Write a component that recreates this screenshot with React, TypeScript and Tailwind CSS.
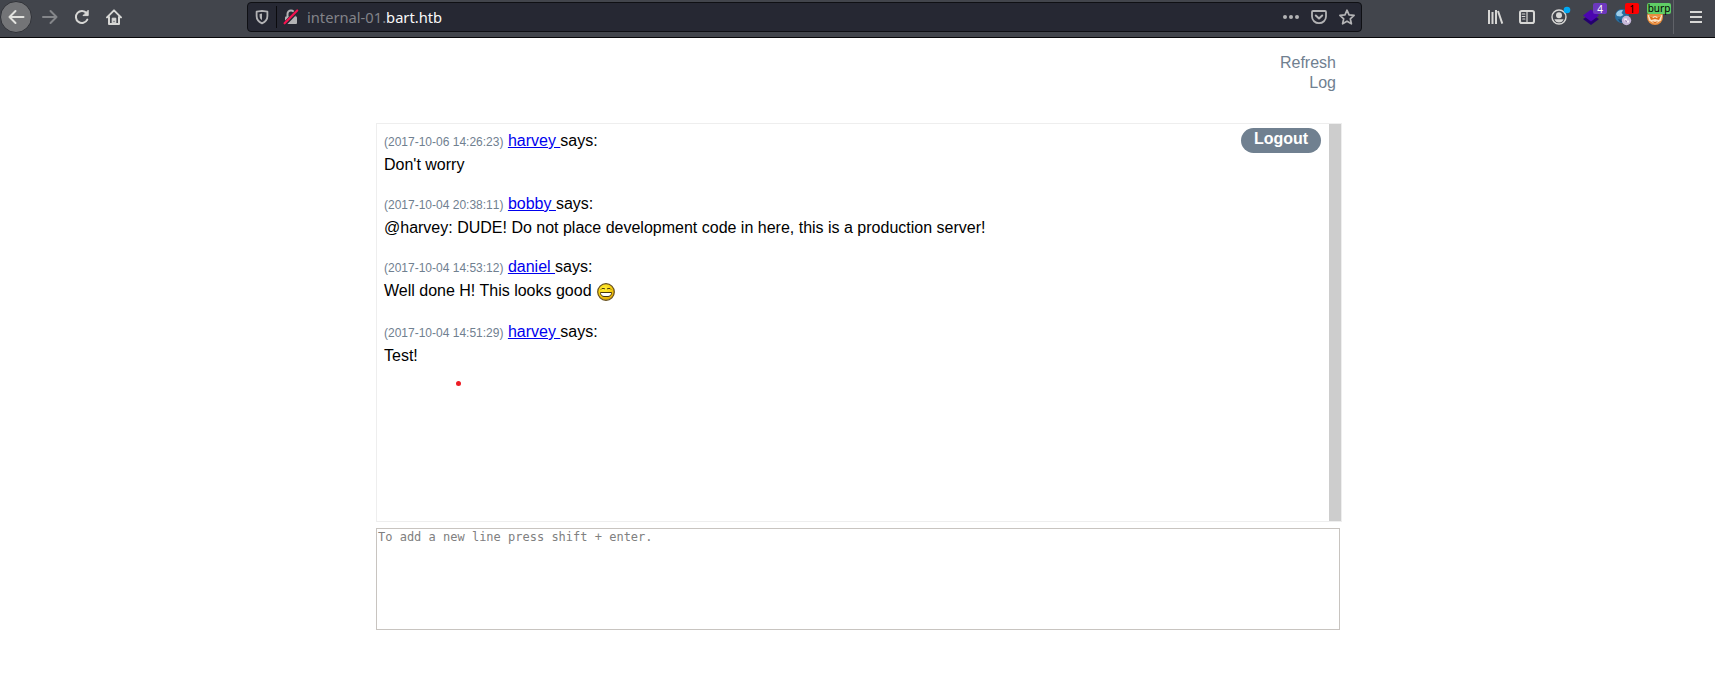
import React from "react";

const line = {
  width: 16,
  height: 16,
  viewBox: "0 0 16 16",
  fill: "none",
  stroke: "currentColor",
  strokeWidth: 2,
  strokeLinecap: "round" as const,
  strokeLinejoin: "round" as const,
  className: "shrink-0 overflow-visible",
};

const BackIcon = () => (
  <svg {...line}><path d="M15.500 8H1.500M7.500 2 1.500 8l6 6" /></svg>
);
const ForwardIcon = () => (
  <svg {...line}><path d="M1 8h13.500M8.500 2l6 6-6 6" /></svg>
);
const ReloadIcon = () => (
  <svg {...line}>
    <path d="M13.300 10.600A6 6 0 1 1 12.600 4.200" />
    <path d="M14.200 1.600v5H9.400z" fill="currentColor" strokeWidth={1} />
  </svg>
);
const HomeIcon = () => (
  <svg {...line}>
    <path d="M1 8.400 8 1.400l7 7M3 8v7h10V8" />
    <path d="M6.200 14.500V9.200h3.600v5.300" fill="currentColor" strokeWidth={1} />
    <path d="M8 12.200v.600" stroke="#42454c" strokeWidth={1} />
  </svg>
);
const ShieldIcon = () => (
  <svg {...line} width={14} height={16} viewBox="0 0 14 16">
    <path d="M7 1.800 1.600 2.700v4.400c0 3.700 2.200 5.900 5.400 7.300 3.200-1.400 5.400-3.600 5.400-7.300V2.700z" strokeWidth={1.800} />
    <path d="M7 4.600 4.600 5.100v2c0 2 .800 3.100 2.400 4.100z" fill="currentColor" stroke="none" />
  </svg>
);
const LockIcon = () => (
  <svg {...line}>
    <path d="M4.500 8V5a3.500 3.500 0 0 1 7 0v3" strokeLinecap="butt" />
    <rect x="2" y="7.500" width="12" height="7.500" rx="1" fill="currentColor" stroke="none" />
    <path d="M2.300 14.300 14.600 1.500" stroke="#262833" strokeWidth={4} />
    <path d="M1.600 14.300 14.200 1.500" stroke="#f5134f" strokeWidth={2.200} />
  </svg>
);
const DotsIcon = () => (
  <svg {...line} stroke="none" fill="currentColor">
    <circle cx="2" cy="8" r="2" /><circle cx="8" cy="8" r="2" /><circle cx="14" cy="8" r="2" />
  </svg>
);
const PocketIcon = () => (
  <svg {...line}>
    <path d="M2 2h12q1 0 1 1v4.500a7 6.700 0 0 1-14 0V3q0-1 1-1z" strokeWidth={1.800} />
    <path d="m4.800 6.500 3.200 3 3.200-3" />
  </svg>
);
const StarIcon = () => (
  <svg {...line} strokeWidth={1.700}>
    <path d="m8 1.200 2 4.600 5.100.500-3.800 3.500 1.100 5L8 12.200l-4.400 2.600 1.100-5L.9 6.300 6 5.800z" />
  </svg>
);
const LibraryIcon = () => (
  <svg {...line} strokeLinecap="butt"><path d="M2 1v14M5.500 3v12M9 1v14M11 2l4.300 12.600" /></svg>
);
const SidebarIcon = () => (
  <svg {...line}>
    <rect x="1" y="2" width="14" height="12" rx="1.800" />
    <path d="M8 2v12M3.200 5h2.600M3.200 7.500h2.600M3.800 10h2" strokeWidth={1.200} />
  </svg>
);
const AccountIcon = () => (
  <svg {...line}>
    <circle cx="8" cy="8" r="7" strokeWidth={1.400} />
    <circle cx="8" cy="6.300" r="3" fill="currentColor" stroke="none" />
    <path d="M3.400 10.200h9.200c-.600 2-2.400 3.300-4.600 3.300s-4-1.300-4.600-3.300z" fill="currentColor" stroke="none" />
    <circle cx="16" cy="1" r="3.300" fill="#00a9f4" stroke="none" />
  </svg>
);
const LayersIcon = () => (
  <svg {...line} stroke="none">
    <path d="m0 10 8-5 8 5-8 6z" fill="#24006e" />
    <path d="m0 6.500 8-6 8 6-8 6z" fill="#4b05b0" />
  </svg>
);
const GlobeIcon = () => (
  <svg {...line} stroke="none">
    <circle cx="7" cy="7" r="7" fill="#286d9d" />
    <path d="M1 5c1-3 4-4.500 7-4L6.500 4l2 2-3 1.500L2 7z" fill="#9ccce8" />
    <path d="M3 10l4 1 1 2-3 .300z" fill="#17486f" />
    <circle cx="11.500" cy="11.500" r="4.700" fill="#c5b7d8" />
    <path d="M9 9.500h3v2h2v2h-4z" fill="#f5eff8" />
    <path d="m10 11 2 1-1 2z" fill="#8367a6" />
  </svg>
);
const FoxIcon = () => (
  <svg {...line} stroke="none">
    <circle cx="8" cy="8" r="8" fill="#e98d3c" />
    <path d="M.5 5.500 5 8l3-1 3 1 4.500-2.500-1.500 6-6 3.500-6-3.500z" fill="#fae1c3" />
    <path d="m2 6.500 4.500 2.500L8 8l1.500 1L14 6.500l-2 4.500-4-1-4 1z" fill="#e06e18" />
    <path d="m5 12 3 1 3-1-3 3z" fill="#e06e18" />
  </svg>
);
const Smiley = () => (
  <svg width="18" height="18" viewBox="0 0 18 18" className="mt-[4px] ml-[5px] shrink-0">
    <defs>
      <radialGradient id="face" cx="40%" cy="30%" r="70%">
        <stop offset="0" stopColor="#ffee3a" /><stop offset=".6" stopColor="#f7d010" /><stop offset="1" stopColor="#dca408" />
      </radialGradient>
    </defs>
    <circle cx="9" cy="9" r="8.300" fill="url(#face)" stroke="#66501f" strokeWidth="1.200" />
    <path d="M4 6.500 5 5.500h2l1 .500M10 6l1-.500h2l1 1" fill="none" stroke="#4d3b0c" />
    <path d="M3.500 9.500h11v1c-.500 2-2 3-3.500 3H7c-1.500 0-3-1-3.500-3z" fill="#fff" stroke="#49370b" />
  </svg>
);

function Extension({ children, label, badge }: { children: React.ReactNode; label: string; badge: string }) {
  return (
    <div className="relative h-4 w-4 shrink-0">
      {children}
      <span className={`absolute flex items-center justify-center rounded-[2px] font-['Noto_Sans',sans-serif] text-[10px] leading-none ${badge}`}>
        {label}
      </span>
    </div>
  );
}

function Toolbar() {
  return (
    <header className="flex h-[38px] items-start border-b border-[#08080a] bg-[#42454c] text-[#d7d7d5]">
      <div className="mt-px flex h-8 w-8 shrink-0 items-center justify-center rounded-full border border-[#303238] bg-[#737477] text-[#e2e2df]">
        <BackIcon />
      </div>
      <nav className="mt-[9px] ml-[10px] flex w-[205px] shrink-0">
        <span className="mr-4 text-[#84868a]"><ForwardIcon /></span>
        <span className="mr-4"><ReloadIcon /></span>
        <HomeIcon />
      </nav>
      <div className="mt-[2px] flex h-[30px] w-[1115px] shrink-0 items-center rounded-[4px] border border-[#0f1014] bg-[#262833] pr-[6px] pl-[7px] text-[#b3b3b5]">
        <ShieldIcon />
        <div className="ml-[7px] h-[22px] w-px bg-[#0b0b0e]" />
        <div className="ml-[6px] flex"><LockIcon /></div>
        <span className="ml-[8px] whitespace-pre font-['Noto_Sans',sans-serif] text-[14.700px] leading-5 text-[#828389]">
          internal-01.<span className="text-[#f9f9fa]">bart.htb</span>
        </span>
        <div className="ml-auto flex gap-3"><DotsIcon /><PocketIcon /><StarIcon /></div>
      </div>
      <div className="mt-[9px] ml-[125px] flex gap-4">
        <LibraryIcon />
        <SidebarIcon />
        <AccountIcon />
        <Extension label="4" badge="-top-[6px] left-[10px] h-[11px] w-[14px] bg-[#6c38bd] text-white"><LayersIcon /></Extension>
        <Extension label="1" badge="-top-[6px] left-[10px] h-[11px] w-[14px] bg-[#ff0000] text-black"><GlobeIcon /></Extension>
        <Extension label="burp" badge="-top-[6px] left-0 h-[11px] w-[24px] pb-px bg-[#60cc66] text-black"><FoxIcon /></Extension>
      </div>
      <div className="ml-[10px] h-[34px] w-px bg-[#606268]" />
      <div className="mt-[11px] ml-[16px] flex w-3 flex-col gap-[3px]">
        <i className="h-[2px] bg-[#d7d7d5]" /><i className="h-[2px] bg-[#d7d7d5]" /><i className="h-[2px] bg-[#d7d7d5]" />
      </div>
    </header>
  );
}

const messages = [
  { time: "2017-10-06 14:26:23", user: "harvey", text: "Don't worry", smile: false },
  { time: "2017-10-04 20:38:11", user: "bobby", text: "@harvey: DUDE! Do not place development code in here, this is a production server!", smile: false },
  { time: "2017-10-04 14:53:12", user: "daniel", text: "Well done H! This looks good", smile: true },
  { time: "2017-10-04 14:51:29", user: "harvey", text: "Test!", smile: false },
];

export default function App() {
  return (
    <div className="h-[677px] overflow-hidden bg-white font-['Liberation_Sans',Arial,sans-serif] text-base text-black">
      <Toolbar />
      <main className="ml-[376px] w-[966px]">
        <div className="flex h-[85px] flex-col items-end pt-[15px] pr-[6px] leading-5 text-[#708090]">
          <a>Refresh</a>
          <a>Log</a>
        </div>
        <section className="flex h-[399px] border border-[#eeeeee]">
          <div className="relative flex-1 pt-[5px] pl-[7px]">
            {messages.map((m) => (
              <article key={m.time} className={m.smile ? "h-[65px]" : "h-[63px]"}>
                <div className="h-6 leading-6 whitespace-pre">
                  <span className="text-xs leading-6 text-[#708090] [font-kerning:none]">({m.time})</span>{" "}
                  <a className="text-[#0000ee] underline">{m.user + " "}</a>says:
                </div>
                <div className="flex h-6 leading-6">{m.text}{m.smile && <Smiley />}</div>
              </article>
            ))}
            <i className="absolute top-[257px] left-[79px] h-[5px] w-[5px] rounded-full bg-[#ed1c24]" />
          </div>
          <button className="mt-1 mr-2 h-[25px] w-20 rounded-[13px] bg-[#708090] pb-[4px] text-base leading-[21px] font-bold text-white">
            Logout
          </button>
          <div className="w-3 bg-[#cdcdcd]" />
        </section>
        <textarea
          className="mt-[6px] block h-[102px] w-[964px] resize-none border border-[#c8c4c0] p-px font-['DejaVu_Sans_Mono',monospace] text-xs leading-[15px] outline-none placeholder:text-[#808080] placeholder:opacity-100"
          placeholder="To add a new line press shift + enter."
        />
      </main>
    </div>
  );
}
